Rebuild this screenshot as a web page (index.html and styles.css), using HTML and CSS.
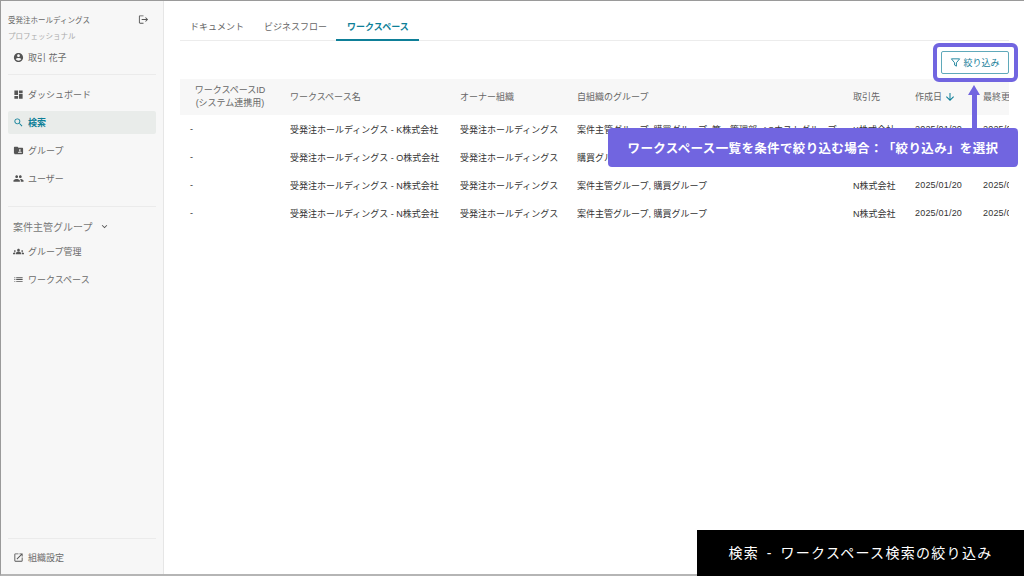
FILE: index.html
```html
<!DOCTYPE html>
<html lang="ja">

<head>
  <meta charset="UTF-8">
  <meta name="viewport" content="width=device-width, initial-scale=1.0">
  <title>ワークスペース検索の絞り込み</title>
  <link rel="stylesheet" href="styles.css">
</head>

<body>
  <div class="screen">
    <aside class="sidebar">
      <div class="org-row">
        <span class="org-name">受発注ホールディングス</span>
        <svg class="icon logout-icon" viewBox="0 0 24 24"><path d="M17 7l-1.41 1.41L18.17 11H8v2h10.17l-2.58 2.58L17 17l5-5zM4 5h8V3H4c-1.1 0-2 .9-2 2v14c0 1.1.9 2 2 2h8v-2H4V5z"/></svg>
      </div>
      <div class="plan-name">プロフェッショナル</div>
      <div class="nav-item user-item">
        <svg class="icon" viewBox="0 0 24 24"><path d="M12 2C6.48 2 2 6.48 2 12s4.48 10 10 10 10-4.48 10-10S17.52 2 12 2zm0 3c1.66 0 3 1.34 3 3s-1.34 3-3 3-3-1.34-3-3 1.34-3 3-3zm0 14.2c-2.5 0-4.71-1.28-6-3.22.03-1.99 4-3.08 6-3.08 1.99 0 5.97 1.09 6 3.08-1.29 1.94-3.5 3.22-6 3.22z"/></svg>
        <span>取引 花子</span>
      </div>
      <hr class="side-divider">
      <nav class="nav-list">
        <div class="nav-item">
          <svg class="icon" viewBox="0 0 24 24"><path d="M3 13h8V3H3v10zm0 8h8v-6H3v6zm10 0h8V11h-8v10zm0-18v6h8V3h-8z"/></svg>
          <span>ダッシュボード</span>
        </div>
        <div class="nav-item active">
          <svg class="icon" viewBox="0 0 24 24"><path d="M15.5 14h-.79l-.28-.27C15.41 12.59 16 11.11 16 9.5 16 5.91 13.09 3 9.5 3S3 5.91 3 9.5 5.91 16 9.5 16c1.61 0 3.09-.59 4.23-1.57l.27.28v.79l5 4.99L20.49 19l-4.99-5zm-6 0C7.01 14 5 11.99 5 9.5S7.01 5 9.5 5 14 7.01 14 9.5 11.99 14 9.5 14z"/></svg>
          <span>検索</span>
        </div>
        <div class="nav-item">
          <svg class="icon" viewBox="0 0 24 24"><path d="M20 6h-8l-2-2H4c-1.1 0-2 .9-2 2v12c0 1.1.9 2 2 2h16c1.1 0 2-.9 2-2V8c0-1.1-.9-2-2-2zm-5 3c1.1 0 2 .9 2 2s-.9 2-2 2-2-.9-2-2 .9-2 2-2zm4 8h-8v-1c0-1.33 2.67-2 4-2s4 .67 4 2v1z"/></svg>
          <span>グループ</span>
        </div>
        <div class="nav-item">
          <svg class="icon" viewBox="0 0 24 24"><path d="M16 11c1.66 0 2.99-1.34 2.99-3S17.66 5 16 5c-1.66 0-3 1.34-3 3s1.34 3 3 3zm-8 0c1.66 0 2.99-1.34 2.99-3S9.66 5 8 5C6.34 5 5 6.34 5 8s1.34 3 3 3zm0 2c-2.33 0-7 1.17-7 3.5V19h14v-2.5c0-2.33-4.67-3.5-7-3.5zm8 0c-.29 0-.62.02-.97.05 1.16.84 1.97 1.97 1.97 3.45V19h6v-2.5c0-2.33-4.67-3.5-7-3.5z"/></svg>
          <span>ユーザー</span>
        </div>
      </nav>
      <hr class="side-divider group-divider">
      <div class="group-heading">
        <span>案件主管グループ</span>
        <svg class="icon" viewBox="0 0 24 24"><path d="M16.59 8.59L12 13.17 7.41 8.59 6 10l6 6 6-6z"/></svg>
      </div>
      <div class="nav-list">
        <div class="nav-item">
          <svg class="icon" viewBox="0 0 24 24"><path d="M12 12.75c1.63 0 3.07.39 4.24.9 1.08.48 1.76 1.56 1.76 2.73V18H6v-1.61c0-1.18.68-2.26 1.76-2.73 1.17-.52 2.61-.91 4.24-.91zM4 13c1.1 0 2-.9 2-2s-.9-2-2-2-2 .9-2 2 .9 2 2 2zm1.13 1.1C4.76 14.04 4.39 14 4 14c-.99 0-1.93.21-2.78.58C.48 14.9 0 15.62 0 16.43V18h4.5v-1.61c0-.83.23-1.61.63-2.29zM20 13c1.1 0 2-.9 2-2s-.9-2-2-2-2 .9-2 2 .9 2 2 2zm4 3.43c0-.81-.48-1.53-1.22-1.85-.85-.37-1.79-.58-2.78-.58-.39 0-.76.04-1.13.1.4.68.63 1.46.63 2.29V18H24v-1.57zM12 6c1.66 0 3 1.34 3 3s-1.34 3-3 3-3-1.34-3-3 1.34-3 3-3z"/></svg>
          <span>グループ管理</span>
        </div>
        <div class="nav-item">
          <svg class="icon" viewBox="0 0 24 24"><path d="M3 13h2v-2H3v2zm0 4h2v-2H3v2zm0-8h2V7H3v2zm4 4h14v-2H7v2zm0 4h14v-2H7v2zM7 7v2h14V7H7z"/></svg>
          <span>ワークスペース</span>
        </div>
      </div>
      <div class="side-footer">
        <hr class="side-divider">
        <div class="nav-item">
          <svg class="icon" viewBox="0 0 24 24"><path d="M19 19H5V5h7V3H5c-1.11 0-2 .9-2 2v14c0 1.1.89 2 2 2h14c1.1 0 2-.9 2-2v-7h-2v7zM14 3v2h3.59l-9.83 9.83 1.41 1.41L19 6.41V10h2V3h-7z"/></svg>
          <span>組織設定</span>
        </div>
      </div>
    </aside>

    <main class="content">
      <div class="tabs">
        <div class="tab">ドキュメント</div>
        <div class="tab">ビジネスフロー</div>
        <div class="tab active">ワークスペース</div>
      </div>
      <div class="toolbar">
        <button class="filter-btn" type="button">
          <svg class="filter-icon" viewBox="0 0 24 24"><path d="M3 4h18l-7 8.6V20l-4-2.4v-5z"/></svg>
          絞り込み
        </button>
      </div>
      <div class="table-wrap">
        <table class="ws-table">
          <colgroup>
            <col class="col-id">
            <col class="col-name">
            <col class="col-owner">
            <col class="col-group">
            <col class="col-partner">
            <col class="col-created">
            <col class="col-updated">
          </colgroup>
          <thead>
            <tr>
              <th class="id-head">ワークスペースID<br>(システム連携用)</th>
              <th>ワークスペース名</th>
              <th>オーナー組織</th>
              <th>自組織のグループ</th>
              <th>取引先</th>
              <th>作成日 <svg class="sort-icon" viewBox="0 0 24 24"><path d="M20 12l-1.41-1.41L13 16.17V4h-2v12.17l-5.58-5.59L4 12l8 8 8-8z"/></svg></th>
              <th>最終更新日</th>
            </tr>
          </thead>
          <tbody>
            <tr>
              <td>-</td>
              <td>受発注ホールディングス - K株式会社</td>
              <td>受発注ホールディングス</td>
              <td>案件主管グループ, 購買グループ, 第一管理部, ASホストグループ</td>
              <td>K株式会社</td>
              <td class="date">2025/01/20</td>
              <td class="date">2025/01/20</td>
            </tr>
            <tr>
              <td>-</td>
              <td>受発注ホールディングス - O株式会社</td>
              <td>受発注ホールディングス</td>
              <td>購買グループ</td>
              <td>O株式会社</td>
              <td class="date">2025/01/20</td>
              <td class="date">2025/01/20</td>
            </tr>
            <tr>
              <td>-</td>
              <td>受発注ホールディングス - N株式会社</td>
              <td>受発注ホールディングス</td>
              <td>案件主管グループ, 購買グループ</td>
              <td>N株式会社</td>
              <td class="date">2025/01/20</td>
              <td class="date">2025/01/20</td>
            </tr>
            <tr>
              <td>-</td>
              <td>受発注ホールディングス - N株式会社</td>
              <td>受発注ホールディングス</td>
              <td>案件主管グループ, 購買グループ</td>
              <td>N株式会社</td>
              <td class="date">2025/01/20</td>
              <td class="date">2025/01/20</td>
            </tr>
          </tbody>
        </table>
      </div>
    </main>

    <!-- annotations on top of the screenshot -->
    <div class="highlight-box"></div>
    <div class="arrow-shaft"></div>
    <div class="arrow-head"></div>
    <div class="callout">ワークスペース一覧を条件で絞り込む場合：「絞り込み」を選択</div>
    <div class="caption">検索 - ワークスペース検索の絞り込み</div>
  </div>
</body>

</html>
```

FILE: styles.css
```css
* {
  box-sizing: border-box;
}

body {
  margin: 0;
  overflow: hidden;
  font-family: "Liberation Sans", "Noto Sans CJK JP", sans-serif;
  background-color: #fff;
}

.screen {
  position: relative;
  display: flex;
  width: 1024px;
  height: 576px;
  border-top: 1px solid #9a9a9a;
  border-left: 1px solid #9a9a9a;
  border-bottom: 2px solid #b5b5b5;
}

/* sidebar */
.sidebar {
  display: flex;
  flex-direction: column;
  flex-shrink: 0;
  width: 163px;
  padding: 0 7px;
  background-color: #f7f7f7;
  border-right: 1px solid #e6e6e6;
  color: #666;
}

.org-row {
  display: flex;
  justify-content: space-between;
  align-items: center;
  height: 14px;
  margin-top: 11px;
  padding-right: 7px;
  font-size: 7.5px;
}

.logout-icon {
  width: 12px;
  height: 12px;
  fill: #8a8a8a;
}

.plan-name {
  margin-top: 4px;
  height: 14px;
  line-height: 14px;
  font-size: 7.5px;
  color: #aaa;
}

.icon {
  flex-shrink: 0;
  width: 11px;
  height: 11px;
  fill: #555;
}

.nav-item {
  display: flex;
  align-items: center;
  gap: 4px;
  height: 23px;
  padding-left: 5px;
  font-size: 9px;
  color: #6a6a6a;
}

.user-item {
  margin-top: 2px;
}

.side-divider {
  width: 100%;
  margin: 0;
  border: 0;
  border-top: 1px solid #ebebeb;
}

.user-item + .side-divider {
  margin-top: 5px;
}

.nav-list {
  display: flex;
  flex-direction: column;
  gap: 5px;
  margin-top: 8px;
}

.nav-item.active {
  border-radius: 2px;
  background-color: #e9ecea;
  color: #0e7f98;
  font-weight: 700;
}

.nav-item.active .icon {
  fill: #0e7f98;
}

.group-divider {
  margin-top: 16px;
}

.group-heading {
  display: flex;
  align-items: center;
  gap: 7px;
  height: 14px;
  margin-top: 12px;
  padding-left: 5px;
  font-size: 10px;
  color: #777;
}

.group-heading + .nav-list {
  margin-top: 7px;
}

.side-footer {
  margin-top: auto;
  padding-bottom: 5px;
}

.side-footer .nav-item {
  margin-top: 7px;
}

/* main */
.content {
  flex: 1;
  min-width: 0;
  padding: 0 15px 0 16px;
}

.tabs {
  display: flex;
  height: 40px;
  padding-top: 14px;
  border-bottom: 1px solid #ececec;
}

.tab {
  height: 26px;
  padding: 0 10px;
  line-height: 24px;
  font-size: 9px;
  color: #666;
}

.tab.active {
  margin-left: -1px;
  padding-left: 11px;
  border-bottom: 2px solid #0e7f98;
  color: #0e7f98;
  font-weight: 700;
}

.toolbar {
  display: flex;
  justify-content: flex-end;
  height: 38px;
  padding-top: 10px;
}

.filter-btn {
  display: flex;
  justify-content: center;
  align-items: center;
  gap: 2px;
  width: 68px;
  height: 23px;
  padding: 0;
  font-family: inherit;
  font-size: 9px;
  color: #17809a;
  background-color: #fff;
  border: 1px solid #5fa9ba;
  border-radius: 2px;
}

.filter-icon {
  width: 11px;
  height: 11px;
  fill: none;
  stroke: #17809a;
  stroke-width: 2;
}

.table-wrap {
  width: 829px;
  overflow: hidden;
}

.ws-table {
  width: 893px;
  table-layout: fixed;
  border-collapse: collapse;
  font-size: 9px;
  color: #333;
}

.col-id { width: 100px; }
.col-name { width: 170px; }
.col-owner { width: 117px; }
.col-group { width: 276px; }
.col-partner { width: 62px; }
.col-created { width: 68px; }
.col-updated { width: 100px; }

.ws-table th {
  height: 36px;
  padding: 0 10px;
  line-height: 13px;
  text-align: left;
  font-weight: 400;
  color: #666;
  background-color: #f7f7f7;
  white-space: nowrap;
}

.ws-table th.id-head {
  text-align: center;
}

.ws-table td {
  height: 28px;
  padding: 0 10px;
  white-space: nowrap;
  overflow: hidden;
}

.ws-table td.date {
  letter-spacing: .2px;
}

.sort-icon {
  width: 12px;
  height: 12px;
  margin-left: -1px;
  vertical-align: -3px;
  fill: #0e7f98;
}

/* annotations */
.highlight-box {
  position: absolute;
  top: 42px;
  left: 932px;
  width: 85px;
  height: 39px;
  border: 4px solid #7165e0;
  border-radius: 6px;
}

.arrow-shaft {
  position: absolute;
  top: 93px;
  left: 971px;
  width: 5px;
  height: 35px;
  background-color: #7165e0;
}

.arrow-head {
  position: absolute;
  top: 84px;
  left: 967px;
  width: 0;
  height: 0;
  border-left: 6.5px solid transparent;
  border-right: 6.5px solid transparent;
  border-bottom: 10px solid #7165e0;
}

.callout {
  position: absolute;
  top: 127px;
  left: 607px;
  width: 410px;
  height: 39px;
  padding-top: 4px;
  line-height: 35px;
  text-align: center;
  font-size: 12.5px;
  font-weight: 700;
  letter-spacing: .35px;
  text-spacing-trim: space-all;
  color: #fff;
  background-color: #7165e0;
  border-radius: 4px;
}

.caption {
  position: absolute;
  top: 529px;
  left: 696px;
  width: 327px;
  height: 46px;
  line-height: 46px;
  text-align: center;
  font-size: 14px;
  letter-spacing: 1.3px;
  word-spacing: 2.5px;
  color: #fff;
  background-color: #000;
}
```
